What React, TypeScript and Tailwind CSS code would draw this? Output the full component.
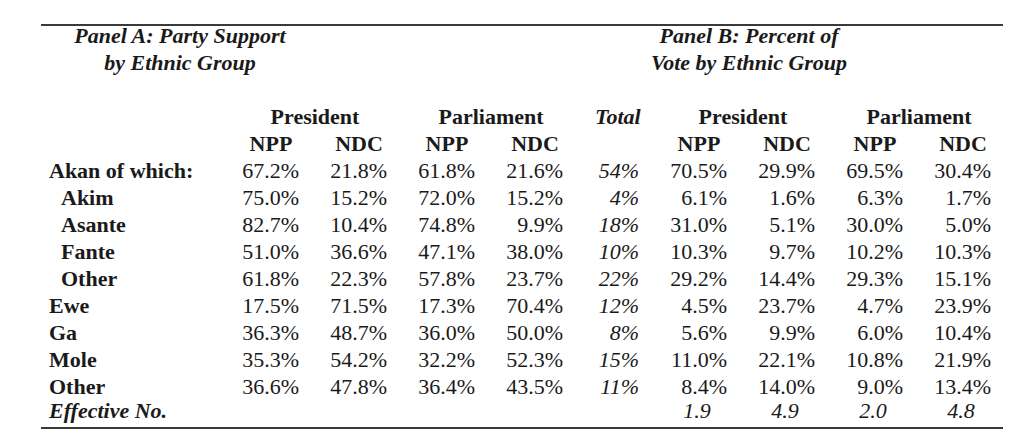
import React from 'react';

type Row = { label: string; sub?: boolean; a: string[]; total: string; b: string[] };

// Panel A: party support, Panel B: percent of vote — both by ethnic group
const rows: Row[] = [
  { label: 'Akan of which:', a: ['67.2%', '21.8%', '61.8%', '21.6%'], total: '54%', b: ['70.5%', '29.9%', '69.5%', '30.4%'] },
  { label: 'Akim', sub: true, a: ['75.0%', '15.2%', '72.0%', '15.2%'], total: '4%', b: ['6.1%', '1.6%', '6.3%', '1.7%'] },
  { label: 'Asante', sub: true, a: ['82.7%', '10.4%', '74.8%', '9.9%'], total: '18%', b: ['31.0%', '5.1%', '30.0%', '5.0%'] },
  { label: 'Fante', sub: true, a: ['51.0%', '36.6%', '47.1%', '38.0%'], total: '10%', b: ['10.3%', '9.7%', '10.2%', '10.3%'] },
  { label: 'Other', sub: true, a: ['61.8%', '22.3%', '57.8%', '23.7%'], total: '22%', b: ['29.2%', '14.4%', '29.3%', '15.1%'] },
  { label: 'Ewe', a: ['17.5%', '71.5%', '17.3%', '70.4%'], total: '12%', b: ['4.5%', '23.7%', '4.7%', '23.9%'] },
  { label: 'Ga', a: ['36.3%', '48.7%', '36.0%', '50.0%'], total: '8%', b: ['5.6%', '9.9%', '6.0%', '10.4%'] },
  { label: 'Mole', a: ['35.3%', '54.2%', '32.2%', '52.3%'], total: '15%', b: ['11.0%', '22.1%', '10.8%', '21.9%'] },
  { label: 'Other', a: ['36.6%', '47.8%', '36.4%', '43.5%'], total: '11%', b: ['8.4%', '14.0%', '9.0%', '13.4%'] },
];

const effective = ['1.9', '4.9', '2.0', '4.8'];

const Num = ({ v, italic }: { v: string; italic?: boolean }) => (
  <div className={`flex justify-end whitespace-nowrap ${italic ? 'italic' : ''}`}>{v}</div>
);

export default function App() {
  return (
    <div className="min-h-screen bg-white pt-[24px] font-['Liberation_Serif','Times_New_Roman',serif] text-[22px] leading-[27px] text-[#1a1a1a]">
      <div className="ml-[41px] w-[962px] border-t-2 border-b-2 border-[#3a3a3a] pr-[12px] pb-[3px]">
        <div className="grid grid-cols-[170px_56px_56px_56px_56px_44px_56px_56px_56px_56px] gap-x-[32px] whitespace-nowrap">
          {/* panel titles */}
          <div className="col-span-2 -mt-[4px] pl-[20px] text-center font-bold italic">
            <div>Panel A: Party Support</div>
            <div>by Ethnic Group</div>
          </div>
          <div className="col-start-6 col-span-4 -mt-[4px] text-center font-bold italic">
            <div>Panel B: Percent of</div>
            <div>Vote by Ethnic Group</div>
          </div>
          <div className="col-span-full h-[27px]" />

          {/* group headers */}
          <div className="col-start-2 col-span-2 text-center font-bold">President</div>
          <div className="col-start-4 col-span-2 text-center font-bold">Parliament</div>
          <div className="col-start-6 text-center font-bold italic">Total</div>
          <div className="col-start-7 col-span-2 text-center font-bold">President</div>
          <div className="col-start-9 col-span-2 text-center font-bold">Parliament</div>

          {/* party headers */}
          <div />
          {['NPP', 'NDC', 'NPP', 'NDC'].map((p, i) => (
            <div key={`ha-${i}`} className="flex justify-center font-bold">{p}</div>
          ))}
          <div />
          {['NPP', 'NDC', 'NPP', 'NDC'].map((p, i) => (
            <div key={`hb-${i}`} className="flex justify-center font-bold">{p}</div>
          ))}

          {rows.map((r, i) => (
            <React.Fragment key={i}>
              <div className={`font-bold ${r.sub ? 'pl-[20px]' : 'pl-[8px]'}`}>{r.label}</div>
              {r.a.map((v, j) => (
                <Num key={`a-${j}`} v={v} />
              ))}
              <Num v={r.total} italic />
              {r.b.map((v, j) => (
                <Num key={`b-${j}`} v={v} />
              ))}
            </React.Fragment>
          ))}

          {/* effective number of parties */}
          <div className="-mt-[3px] pl-[8px] font-bold italic">Effective No.</div>
          {effective.map((v, i) => (
            <div key={`e-${i}`} className={`${i === 0 ? 'col-start-7' : ''} -mt-[3px] pr-[4px] text-center italic`}>{v}</div>
          ))}
        </div>
      </div>
    </div>
  );
}
